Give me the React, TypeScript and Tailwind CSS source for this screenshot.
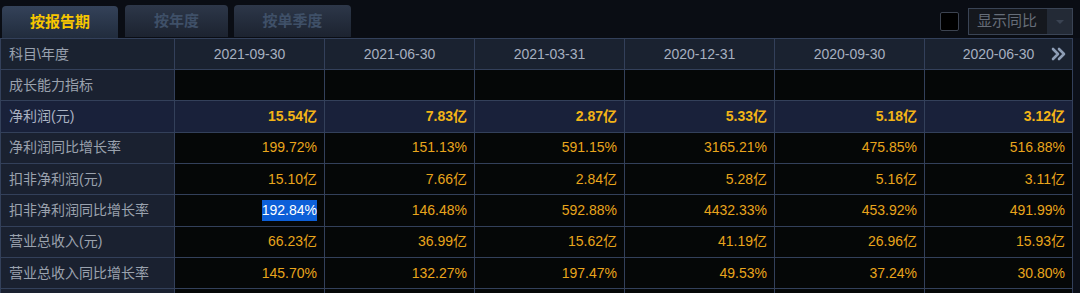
import React from 'react';

const dates = ['2021-09-30', '2021-06-30', '2021-03-31', '2020-12-31', '2020-09-30', '2020-06-30'];

interface Row {
  label: string;
  values: string[];
  bold?: boolean;
}

const rows: Row[] = [
  { label: '成长能力指标', values: ['', '', '', '', '', ''] },
  { label: '净利润(元)', values: ['15.54亿', '7.83亿', '2.87亿', '5.33亿', '5.18亿', '3.12亿'], bold: true },
  { label: '净利润同比增长率', values: ['199.72%', '151.13%', '591.15%', '3165.21%', '475.85%', '516.88%'] },
  { label: '扣非净利润(元)', values: ['15.10亿', '7.66亿', '2.84亿', '5.28亿', '5.16亿', '3.11亿'] },
  { label: '扣非净利润同比增长率', values: ['192.84%', '146.48%', '592.88%', '4432.33%', '453.92%', '491.99%'] },
  { label: '营业总收入(元)', values: ['66.23亿', '36.99亿', '15.62亿', '41.19亿', '26.96亿', '15.93亿'] },
  { label: '营业总收入同比增长率', values: ['145.70%', '132.27%', '197.47%', '49.53%', '37.24%', '30.80%'] },
  { label: '', values: ['', '', '', '', '', ''] },
];

const font = "font-['Liberation_Sans','Noto_Sans_CJK_SC',sans-serif]";

export default function App() {
  return (
    <div className={`w-[1080px] h-[293px] overflow-hidden bg-[#0a0d14] ${font}`}>
      {/* tabs */}
      <div className="h-[38px] flex items-end pl-[2px] pr-[7px]">
        <div className="w-[116px] h-[32px] rounded-t-[4px] bg-gradient-to-b from-[#344259] to-[#212c3d] flex items-center justify-center text-[15px] font-bold text-[#f7c600]">
          按报告期
        </div>
        <div className="ml-[7px] w-[103px] h-[32px] mb-[1px] rounded-t-[4px] bg-gradient-to-b from-[#2d3749] to-[#1c2330] flex items-center justify-center text-[15px] font-bold text-[#3f5068]">
          按年度
        </div>
        <div className="ml-[6px] w-[117px] h-[32px] mb-[1px] rounded-t-[4px] bg-gradient-to-b from-[#2d3749] to-[#1c2330] flex items-center justify-center text-[15px] font-bold text-[#3f5068]">
          按单季度
        </div>
        <div className="flex-1" />
        <div className="self-start mt-[12px] w-[19px] h-[19px] bg-black border border-[#3c4350] rounded-[2px]" />
        <div className="self-start mt-[8px] ml-[9px] w-[105px] h-[27px] border border-[#3a4455] bg-[#15181e] flex">
          <div className="flex-1 flex items-center pl-[8px] text-[15px] text-[#666d78]">显示同比</div>
          <div className="w-[25px] bg-[#232a36] flex items-center justify-center">
            <div className="w-0 h-0 border-l-[4px] border-r-[4px] border-t-[4px] border-l-transparent border-r-transparent border-t-[#3a4352]" />
          </div>
        </div>
      </div>

      {/* table */}
      <div className="flex">
        <div className="w-[1073px] border-t border-r border-[#33405a]">
          <div className="flex h-[31px] border-b border-[#33405a] bg-[#1a2230] text-[14px] text-[#a6b0c0]">
            <div className="w-[174px] border-l border-[#33405a] flex items-center pl-[8px] text-[#9aa3b0]">科目\年度</div>
            {dates.map((d, i) => (
              <div
                key={d}
                className={`${i === 5 ? 'flex-1' : 'w-[150px]'} border-l border-[#33405a] flex items-center justify-center relative`}
              >
                {d}
                {i === 5 && (
                  <svg
                    className="absolute right-[6px] top-[8px]"
                    width="15"
                    height="14"
                    viewBox="0 0 15 14"
                    fill="none"
                    stroke="#8d9db5"
                    strokeWidth="2.6"
                    strokeLinecap="round"
                    strokeLinejoin="round"
                  >
                    <path d="M2 2l5 5-5 5" />
                    <path d="M8 2l5 5-5 5" />
                  </svg>
                )}
              </div>
            ))}
          </div>
          {rows.map((r, ri) => (
            <div
              key={ri}
              className={`flex h-[31.33px] border-b border-[#33405a] text-[14px] ${r.bold ? 'bg-[#19213a]' : ''}`}
            >
              <div
                className={`w-[174px] border-l border-[#33405a] flex items-center pl-[8px] ${
                  r.bold ? 'bg-[#19213a] text-[#aab2c2]' : 'bg-[#1a2130] text-[#9aa2ae]'
                }`}
              >
                {r.label}
              </div>
              {r.values.map((v, i) => (
                <div
                  key={i}
                  className={`${i === 5 ? 'flex-1' : 'w-[150px]'} border-l border-[#33405a] flex items-center justify-end pr-[7px] ${
                    r.bold ? 'bg-[#19213a] font-bold text-[#f2b416]' : 'bg-[#050707] text-[#e9a51c]'
                  }`}
                >
                  {ri === 4 && i === 0 ? (
                    <span className="bg-[#0c5fd8] text-white leading-[21px]">{v}</span>
                  ) : (
                    v
                  )}
                </div>
              ))}
            </div>
          ))}
        </div>
        <div className="flex-1 bg-[#0c1019]" />
      </div>
    </div>
  );
}
